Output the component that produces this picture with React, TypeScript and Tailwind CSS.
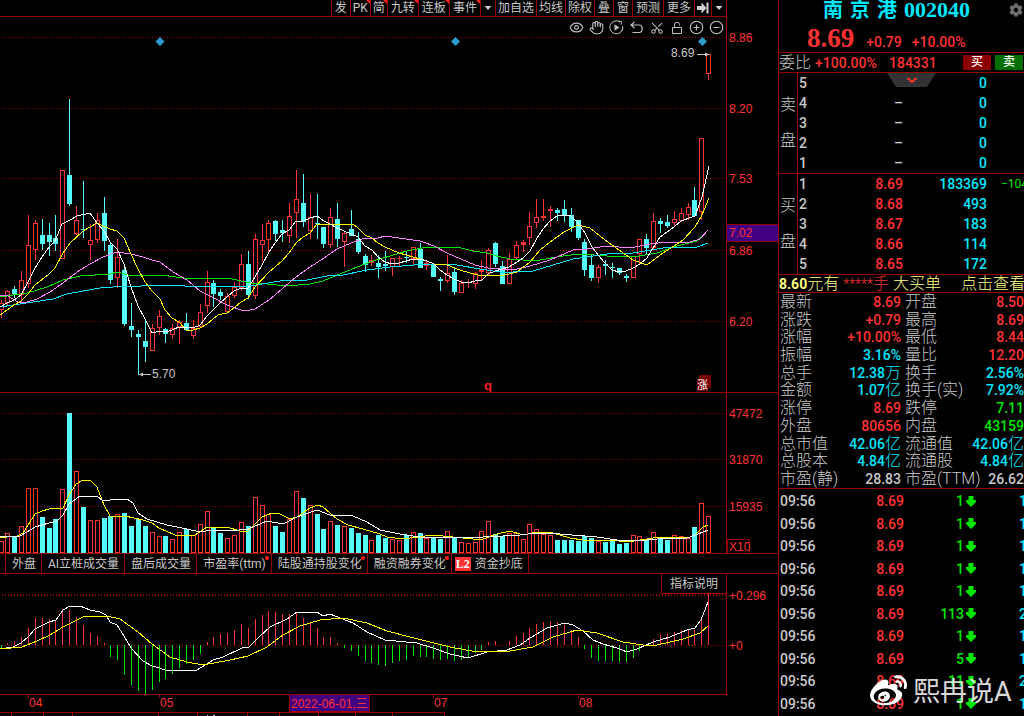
import React from "react";
import { CircleMinus, CirclePlus, Eye, Hand, Scissors, Undo2 } from "lucide-react";
import { FaCog, FaWeibo } from "react-icons/fa";

type Direction = "r" | "c";
// direction, high, low, body top, body bottom, volume top, histogram end
type Day = [Direction, number, number, number, number, number, number];

const days: Day[] = [
  ["r", 300, 318, 303, 310, 541, 649],
  ["r", 290, 306, 291, 303, 533, 643],
  ["c", 286, 298, 289, 294, 537, 641],
  ["r", 271, 302, 280, 295, 526, 637],
  ["r", 215, 288, 245, 284, 488, 628],
  ["r", 220, 260, 223, 250, 488, 618],
  ["c", 219, 250, 235, 244, 517, 618],
  ["c", 223, 256, 235, 242, 528, 619],
  ["c", 215, 251, 238, 244, 519, 621],
  ["r", 170, 259, 170, 259, 489, 609],
  ["c", 99, 206, 175, 204, 413, 610],
  ["r", 206, 235, 220, 234, 471, 617],
  ["c", 181, 238, 229, 230, 507, 625],
  ["r", 224, 260, 240, 245, 520, 633],
  ["r", 213, 243, 220, 240, 520, 636],
  ["c", 197, 251, 213, 241, 518, 643],
  ["c", 242, 284, 245, 280, 516, 657],
  ["r", 239, 288, 257, 278, 514, 660],
  ["c", 266, 326, 270, 324, 513, 675],
  ["c", 303, 337, 326, 330, 526, 685],
  ["c", 330, 375, 334, 337, 519, 691],
  ["c", 319, 362, 341, 347, 526, 694],
  ["r", 324, 351, 328, 351, 532, 690],
  ["r", 310, 335, 316, 328, 536, 682],
  ["c", 328, 343, 329, 334, 536, 679],
  ["r", 324, 339, 328, 335, 539, 674],
  ["r", 320, 344, 322, 327, 532, 668],
  ["c", 313, 330, 323, 330, 529, 664],
  ["r", 320, 339, 328, 336, 535, 660],
  ["r", 304, 328, 312, 327, 524, 654],
  ["r", 271, 313, 282, 306, 511, 642],
  ["c", 280, 307, 283, 294, 528, 637],
  ["c", 289, 300, 292, 296, 533, 634],
  ["r", 293, 313, 296, 312, 538, 633],
  ["r", 282, 298, 287, 296, 535, 630],
  ["r", 254, 291, 264, 288, 522, 624],
  ["c", 251, 299, 264, 295, 526, 628],
  ["r", 234, 299, 239, 296, 497, 619],
  ["r", 224, 261, 240, 245, 505, 615],
  ["r", 220, 252, 223, 240, 514, 611],
  ["c", 220, 241, 221, 234, 526, 612],
  ["c", 220, 242, 230, 233, 532, 614],
  ["r", 203, 243, 216, 236, 519, 614],
  ["r", 170, 238, 199, 213, 491, 613],
  ["c", 174, 227, 203, 222, 498, 618],
  ["r", 194, 239, 217, 231, 505, 623],
  ["c", 194, 239, 223, 224, 514, 628],
  ["c", 227, 248, 227, 244, 529, 637],
  ["r", 208, 248, 217, 245, 521, 637],
  ["c", 203, 247, 219, 239, 525, 643],
  ["r", 231, 267, 233, 242, 526, 648],
  ["c", 210, 236, 229, 236, 528, 651],
  ["c", 232, 254, 239, 252, 533, 656],
  ["c", 254, 272, 256, 265, 535, 661],
  ["r", 255, 266, 260, 263, 540, 663],
  ["c", 255, 278, 263, 267, 535, 665],
  ["c", 251, 271, 264, 266, 538, 666],
  ["r", 258, 276, 258, 267, 539, 663],
  ["r", 256, 266, 258, 259, 540, 661],
  ["c", 252, 263, 257, 258, 535, 660],
  ["r", 247, 266, 247, 259, 532, 656],
  ["c", 243, 268, 249, 268, 533, 657],
  ["r", 261, 270, 263, 266, 538, 657],
  ["c", 265, 277, 265, 277, 537, 659],
  ["c", 277, 291, 279, 281, 539, 660],
  ["r", 255, 283, 273, 281, 531, 659],
  ["c", 268, 295, 272, 292, 537, 661],
  ["r", 280, 293, 283, 293, 542, 660],
  ["r", 279, 288, 282, 283, 543, 657],
  ["r", 272, 289, 273, 284, 542, 653],
  ["r", 260, 280, 269, 272, 531, 650],
  ["r", 248, 275, 250, 273, 521, 642],
  ["c", 242, 267, 243, 264, 534, 641],
  ["c", 261, 284, 266, 284, 536, 645],
  ["r", 253, 284, 259, 284, 533, 641],
  ["r", 241, 260, 245, 258, 533, 636],
  ["r", 240, 252, 242, 245, 539, 633],
  ["r", 212, 245, 226, 238, 524, 628],
  ["r", 199, 228, 217, 223, 529, 624],
  ["r", 199, 221, 216, 218, 534, 622],
  ["r", 206, 227, 209, 211, 535, 621],
  ["c", 208, 221, 210, 213, 540, 622],
  ["c", 200, 222, 209, 216, 540, 625],
  ["c", 208, 232, 215, 227, 540, 630],
  ["c", 220, 240, 220, 238, 541, 637],
  ["c", 239, 276, 242, 270, 536, 649],
  ["c", 255, 281, 265, 278, 538, 658],
  ["r", 265, 283, 267, 278, 541, 661],
  ["c", 260, 275, 264, 266, 542, 661],
  ["c", 263, 278, 267, 268, 541, 661],
  ["c", 268, 275, 268, 273, 544, 662],
  ["c", 274, 282, 276, 278, 543, 662],
  ["r", 256, 278, 256, 278, 535, 658],
  ["r", 239, 265, 239, 254, 536, 651],
  ["c", 234, 254, 239, 248, 539, 646],
  ["r", 213, 250, 221, 248, 532, 639],
  ["c", 218, 233, 221, 224, 539, 635],
  ["c", 215, 228, 222, 226, 540, 634],
  ["r", 211, 226, 219, 223, 535, 632],
  ["r", 208, 222, 213, 221, 536, 630],
  ["r", 203, 220, 207, 215, 538, 630],
  ["c", 187, 216, 200, 216, 527, 630],
  ["r", 138, 220, 138, 212, 503, 618],
  ["r", 54, 80, 54, 74, 516, 594],
];

const RED = "#ff3232";
const CYAN = "#54fcfc";
const GRID = "#960000";
const dayX = (i: number) => Math.floor(1 + 6.87 * i);

const priceLines: [string, string][] = [
  ["#00e600", "0,297 27,293 47,287 63,280 80,276 110,274 117,272 128,275 162,275 183,278 228,278 250,283 267,284 287,286 310,284 323,281 340,274 357,267 373,261 390,256 407,251 427,247 457,247 473,251 487,253 497,256 510,259 523,260 540,260 563,256 580,254 607,256 633,257 657,253 673,247 697,241 708,230"],
  ["#00e6ff", "0,307 33,302 53,299 67,294 100,288 113,287 170,285 200,287 250,286 280,281 307,280 327,276 343,275 367,270 390,267 427,264 457,265 480,269 500,272 513,272 533,271 553,265 573,259 607,254 633,253 663,248 697,247 708,243"],
  ["#ff80ff", "0,295 8,296 18,302 27,302 37,299 50,292 63,283 77,272 90,264 103,257 117,252 131,254 143,257 152,260 160,262 173,272 187,280 200,291 214,298 227,305 241,310 250,310 255,309 269,300 282,289 296,277 310,267 324,258 337,249 351,243 365,238 378,238 385,236 399,238 420,241 434,246 447,253 461,259 475,265 488,268 500,269 517,269 530,266 550,260 573,250 587,249 607,246 630,248 650,244 667,242 690,242 700,239 708,230"],
  ["#ffff00", "0,315 14,305 21,301 28,294 35,285 49,274 55,268 63,253 70,243 83,231 97,223 103,226 110,229 117,231 124,238 131,254 138,269 145,282 152,291 160,299 165,310 172,318 179,322 186,330 193,330 200,328 207,324 218,315 227,313 234,308 241,302 248,298 255,287 269,272 282,261 289,253 296,243 303,237 310,233 317,224 323,225 330,224 353,224 358,228 365,235 372,238 378,243 385,247 399,253 413,257 427,261 434,264 447,265 460,270 470,273 482,276 488,275 505,275 517,272 530,262 540,250 550,242 564,232 578,225 590,228 605,240 619,250 633,260 647,265 660,255 674,246 683,240 695,227 702,215 709,198"],
  ["#ffffff", "0,307 7,303 14,300 21,295 28,282 35,268 42,257 49,247 55,241 62,224 70,220 77,216 90,213 97,223 104,231 110,242 117,249 124,264 131,287 138,306 145,319 152,333 160,331 167,332 179,327 186,327 193,328 200,325 207,316 214,309 220,303 227,297 234,291 241,288 248,288 255,277 262,265 269,252 275,243 282,234 289,230 296,221 303,221 310,218 317,216 324,221 330,224 337,228 344,231 351,234 358,237 365,246 372,250 378,257 385,262 392,264 399,263 413,259 420,259 427,261 434,264 440,270 447,275 454,279 461,282 468,283 475,281 482,280 488,274 495,271 502,269 509,267 517,262 523,258 530,251 537,238 543,229 550,221 557,216 564,215 571,216 578,223 585,233 592,247 598,255 605,263 612,270 619,272 626,271 633,268 640,264 647,258 653,248 660,237 667,232 674,227 681,221 695,216 702,197 709,166"],
];

const volumeLines: [string, string][] = [
  ["#ffff00", "0,538 7,537 17,536 23,533 28,525 35,514 42,511 49,509 63,508 69,495 76,484 83,480 90,480 97,487 104,505 110,516 117,517 125,516 143,520 152,523 159,528 175,535 195,535 207,527 227,527 240,531 248,531 255,524 262,517 272,513 280,514 290,519 297,517 310,508 318,505 323,507 337,519 348,525 363,529 380,534 387,537 403,539 433,535 453,537 473,539 483,539 497,534 510,531 523,535 537,532 553,533 570,538 583,540 610,540 627,542 647,539 660,537 687,538 695,535 703,527 708,525"],
  ["#ffffff", "0,537 20,536 27,532 35,527 49,523 57,521 63,515 69,504 80,496 97,496 103,501 117,499 127,499 133,503 138,513 147,519 167,525 187,529 200,532 213,530 230,531 248,529 267,521 283,524 297,517 317,510 330,515 353,516 367,522 380,530 400,534 420,537 483,537 503,536 520,535 537,533 560,534 597,537 617,540 637,541 657,539 687,538 698,534 708,530"],
];

const macdLines: [string, string][] = [
  ["#ffffff", "0,649 13,647 21,643 28,637 35,629 49,622 56,620 63,610 70,606 80,606 90,610 100,612 106,615 110,622 117,625 124,636 131,648 143,661 152,666 160,668 167,671 180,670 195,671 202,667 213,660 223,657 242,648 249,647 260,636 270,627 287,619 297,612 317,612 323,616 330,614 353,623 367,632 385,640 417,643 433,648 450,654 468,658 487,652 507,650 520,645 530,638 547,628 565,623 573,625 583,631 593,640 603,644 617,648 627,652 637,649 653,642 670,637 687,630 695,628 701,620 708,602"],
  ["#ffff00", "0,649 22,647 37,641 50,635 63,627 83,617 107,616 120,619 138,632 152,644 170,657 187,662 203,665 230,660 248,656 267,647 283,635 300,626 320,620 343,618 367,623 387,631 410,637 430,642 450,647 477,652 510,651 533,647 553,637 577,630 597,633 623,642 643,645 657,645 683,639 700,633 708,626"],
];

function Curves({ lines }: { lines: [string, string][] }) {
  return (
    <>
      {lines.map(([color, points], i) => (
        <polyline key={i} points={points} fill="none" stroke={color} strokeWidth="1" shapeRendering="crispEdges" />
      ))}
    </>
  );
}

function GridLine({ y, thick = 1 }: { y: number; thick?: number }) {
  return (
    <line x1="2" x2="726" y1={y} y2={y} stroke={GRID} strokeWidth={thick} strokeDasharray="1 2" shapeRendering="crispEdges" />
  );
}

function PriceChart() {
  return (
    <svg className="block h-[375px] w-full" viewBox="0 17 726 375" preserveAspectRatio="none" role="img" aria-label="日K线">
      {[37.5, 108.5, 178.5, 250.5, 321.5].map((y) => (
        <GridLine key={y} y={y} />
      ))}
      <g shapeRendering="crispEdges">
        {days.map(([dir, high, low, top, bottom], i) => {
          const x = dayX(i);
          const color = dir === "r" ? RED : CYAN;
          const hollow = dir === "r" && bottom - top > 3;
          return (
            <g key={i}>
              <rect x={x} y={high} width="1" height={low - high} fill={color} />
              {hollow ? (
                <rect x={x - 1.5} y={top + 0.5} width="4" height={bottom - top - 1} fill="#000" stroke={color} />
              ) : (
                <rect x={x - 2} y={top} width="5" height={bottom - top} fill={color} />
              )}
            </g>
          );
        })}
      </g>
      <Curves lines={priceLines} />
      {[160, 455.5, 702.5].map((x) => (
        <path key={x} d={`M${x} 37 l4.5 4.5 l-4.5 4.5 l-4.5 -4.5z`} fill="#2b9bd0" />
      ))}
      <g fill="#c8c8c8" fontSize="12" fontFamily="Liberation Sans, Arial, sans-serif">
        <text x="671" y="57">8.69</text>
        <text x="152" y="378">5.70</text>
      </g>
      <path d="M697 54.5 H709 M140 374.5 H151" stroke="#c8c8c8" />
      <path d="M705 52.5 L709 54.5 L705 56.5z M143 372.5 L139 374.5 L143 376.5z" fill="#c8c8c8" />
      <text x="484" y="390" fill="#ff1e1e" fontSize="13" fontWeight="700" fontFamily="Liberation Sans, Arial, sans-serif">q</text>
      <path d="M699 375 H711 V388 H708 V391 H697 V379 H699z" fill="#780000" />
      <text x="697" y="389" fill="#fff" fontSize="11" fontFamily="Noto Sans CJK SC, sans-serif">涨</text>
    </svg>
  );
}

function VolumeChart() {
  return (
    <svg className="block h-[160px] w-full" viewBox="0 393 726 160" preserveAspectRatio="none" role="img" aria-label="成交量">
      {[413.5, 459.5, 506.5].map((y) => (
        <GridLine key={y} y={y} />
      ))}
      <g shapeRendering="crispEdges">
        {days.map(([dir, , , , , top], i) =>
          dir === "r" ? (
            <rect key={i} x={dayX(i) - 1.5} y={top + 0.5} width="4" height={552 - top} fill="#000" stroke={RED} />
          ) : (
            <rect key={i} x={dayX(i) - 2} y={top} width="5" height={553 - top} fill={CYAN} />
          ),
        )}
      </g>
      <Curves lines={volumeLines} />
    </svg>
  );
}

function MacdChart() {
  return (
    <svg className="block h-[120px] w-full" viewBox="0 574 726 120" preserveAspectRatio="none" role="img" aria-label="MACD">
      <GridLine y={595} thick={2} />
      <GridLine y={645.5} />
      <g shapeRendering="crispEdges">
        {days.map(([, , , , , , end], i) => (
          <rect
            key={i}
            x={dayX(i)}
            y={Math.min(end, 645)}
            width="1"
            height={Math.abs(end - 645)}
            fill={end < 645 ? RED : "#00e600"}
          />
        ))}
      </g>
      <Curves lines={macdLines} />
    </svg>
  );
}

function Axis({ top, height, labels, children }: { top: number; height: number; labels: [string, number][]; children?: React.ReactNode }) {
  return (
    <svg className="block shrink-0" width="51" height={height} viewBox={`0 ${top} 51 ${height}`}>
      {children}
      <g fill={RED} fontSize="12" fontFamily="Liberation Sans, Arial, sans-serif">
        {labels.map(([text, y]) => (
          <text key={text} x="2" y={y}>
            {text}
          </text>
        ))}
      </g>
    </svg>
  );
}

const WIDE = "relative flex items-center border-l border-[#960000] px-[3px] text-xs leading-4 text-[#c8c8c8]";
const TIGHT = "relative flex items-center border-l border-[#960000] px-0.5 text-xs leading-4 text-[#c8c8c8]";

const tools: [string, boolean, string][] = [
  ["发", false, WIDE],
  ["PK", true, TIGHT],
  ["简", true, TIGHT],
  ["九转", true, WIDE],
  ["连板", true, WIDE],
  ["事件", true, WIDE],
  ["▾", false, WIDE],
  ["加自选", false, TIGHT],
  ["均线", false, TIGHT],
  ["除权", false, TIGHT],
  ["叠", false, WIDE],
  ["窗", false, WIDE],
  ["预测", false, WIDE],
  ["更多", false, WIDE],
  ["⇥", false, TIGHT],
  ["▾", false, WIDE],
];

function ToolGlyph({ name }: { name: string }) {
  if (name === "▾")
    return (
      <svg width="8" height="10" viewBox="0 0 8 10">
        <path d="M0.5 3 H7.5 L4 7z" fill="#d0d0d0" />
      </svg>
    );
  if (name === "⇥")
    return (
      <svg width="12" height="12" viewBox="0 0 12 12">
        <path d="M0 4 H4.5 V0.5 L9.5 6 L4.5 11.5 V8 H0z M9.5 0.5 H11.5 V11.5 H9.5z" fill="#d0d0d0" />
      </svg>
    );
  return <>{name}</>;
}

function Toolbar() {
  return (
    <nav className="mr-[51px] flex h-[17px] justify-end overflow-hidden border-r border-b border-[#960000]">
      {tools.map(([name, flagged, style], i) => (
        <button
          key={i}
          type="button"
          aria-label={name === "▾" ? "展开" : name === "⇥" ? "右移" : undefined}
          className={style}
        >
          <ToolGlyph name={name} />
          {flagged && (
            <svg className="absolute top-0 right-0" width="4" height="4" viewBox="0 0 4 4">
              <path d="M0 0 H4 V4z" fill="#ff1e1e" />
            </svg>
          )}
        </button>
      ))}
    </nav>
  );
}

function ReplayIcon() {
  return (
    <svg width="15" height="15" viewBox="0 0 15 15" fill="none" stroke="currentColor">
      <path d="M11 2 A6.5 6.5 0 1 0 13.7 6" />
      <path d="M9.5 1 L12.5 1.5 L12 4.5" />
      <path d="M13.8 8.5 A6.5 6.5 0 0 1 12.5 11.5" />
      <path d="M5.5 4.2 L10.5 7.5 L5.5 10.8z" fill="currentColor" stroke="none" />
    </svg>
  );
}

function UndoIcon() {
  return (
    <svg width="13" height="13" viewBox="0 0 13 13" fill="none" stroke="currentColor" strokeWidth="1.2">
      <path d="M4.5 1 L1 4 L4.5 7 M1 4 H9.5 A2.5 3.5 0 0 1 9.5 11.5 H2.5" />
    </svg>
  );
}

function ChartTools() {
  const button = "flex size-[15px] items-center justify-center";
  return (
    <div className="absolute top-[3px] right-0.5 flex gap-[5px] text-[#c0c0c0]">
      <button type="button" aria-label="显示" className={button}><Eye size={15} strokeWidth={1.8} /></button>
      <button type="button" aria-label="拖动" className={button}><Hand size={15} strokeWidth={1.8} /></button>
      <button type="button" aria-label="回放" className={button}><ReplayIcon /></button>
      <button type="button" aria-label="撤销" className={button}><UndoIcon /></button>
      <button type="button" aria-label="剪切" className={button}><Scissors size={14} strokeWidth={1.8} className="-rotate-90" /></button>
      <button type="button" aria-label="锁定" className={button}>
        <svg width="12" height="14" viewBox="0 0 12 14" fill="none" stroke="currentColor">
          <path d="M1.5 6.5 H10.5 V12.5 H1.5z M3.5 6.5 V4 A2.5 2.5 0 0 1 8.5 3.5 V4.5" />
        </svg>
      </button>
      <button type="button" aria-label="放大" className={button}><CirclePlus size={15} strokeWidth={1.8} /></button>
      <button type="button" aria-label="缩小" className={button}><CircleMinus size={15} strokeWidth={1.8} /></button>
    </div>
  );
}

const tabs: [string, boolean][] = [
  ["外盘", false],
  ["AI立桩成交量", false],
  ["盘后成交量", false],
  ["市盈率(ttm)", true],
  ["陆股通持股变化", true],
  ["融资融券变化", true],
  ["资金抄底", false],
];

function IndicatorTabs() {
  return (
    <div className="flex h-[21px] border-y border-[#960000] pl-[5px]">
      {tabs.map(([name, dot]) => (
        <button
          key={name}
          type="button"
          className="relative flex items-center border-l border-[#960000] pr-[5px] pl-1.5 text-xs leading-4 whitespace-nowrap text-[#c8c8c8] last:border-r last:pl-[3px]"
        >
          {name === "资金抄底" && (
            <span className="mr-1 bg-[#ff3232] px-px font-['Liberation_Serif',serif] text-xs leading-[14px] font-bold text-white">L2</span>
          )}
          {name}
          {dot && <span className="absolute top-0.5 right-0.5 size-1 rounded-full bg-[#ff1e1e]" />}
        </button>
      ))}
    </div>
  );
}

function Dates() {
  const months: [string, number][] = [
    ["04", 28],
    ["05", 159],
    ["07", 433],
    ["08", 578],
  ];
  return (
    <div className="mr-[51px]">
      <svg className="block h-[21px] w-full" viewBox="0 695 727 21" preserveAspectRatio="none" role="img" aria-label="日期">
        <g fill={RED} fontSize="12" fontFamily="Liberation Sans, Noto Sans CJK SC, sans-serif">
          <rect x="289.5" y="694.5" width="80" height="17" fill="#400080" stroke={GRID} />
          <text x="291" y="708">2022-06-01,三</text>
          {months.map(([label, x]) => (
            <React.Fragment key={label}>
              <rect x={x} y="695" width="1" height="3" fill={GRID} />
              <text x={x + 1} y="707">{label}</text>
            </React.Fragment>
          ))}
        </g>
        <path
          d="M0 712.5 H444.5 V716 M11.5 713 V716 M43.5 713 V716 M72.5 713 V716 M158.5 713 V716 M197.5 713 V716 M247.5 713 V716 M279.5 713 V716 M318.5 713 V716 M355.5 713 V716 M392.5 713 V716"
          fill="none"
          stroke={GRID}
          shapeRendering="crispEdges"
        />
        <path d="M207 715 h1 v1 h-1z M213 715 h2 v1 h-2z" fill="#c8c8c8" shapeRendering="crispEdges" />
      </svg>
    </div>
  );
}

function Book({ side, rows }: { side: string; rows: [string, string, string, string?][] }) {
  return (
    <section className="flex h-[101px] border-b border-[#960000]">
      <h2 className="flex w-[19px] shrink-0 flex-col items-center justify-center border-r border-[#960000] text-base leading-9 font-light text-[#c8c8c8]">
        <span>{side}</span>
        <span>盘</span>
      </h2>
      <table className="h-[100px] w-full table-fixed border-collapse text-sm leading-none font-medium">
        <tbody>
          {rows.map(([level, price, amount, change]) => (
            <tr key={level}>
              <td className="w-[21px] p-0 pl-px text-[#c8c8c8]">{level}</td>
              <td className={price === "–" ? "w-[84px] p-0 text-right text-[#c8c8c8]" : "w-[84px] p-0 text-right text-[#ff3232]"}>{price}</td>
              <td className="w-[84px] p-0 text-right text-[#00e6ff]">{amount}</td>
              <td className="overflow-hidden p-0 pl-3.5 text-xs leading-none font-normal whitespace-nowrap text-[#00e600]">{change}</td>
            </tr>
          ))}
        </tbody>
      </table>
    </section>
  );
}

const R = "w-[62px] p-0 text-right text-[#ff3232]";
const C = "w-[62px] p-0 text-right text-[#00e6ff]";
const G = "w-[62px] p-0 text-right text-[#00e600]";
const W = "w-[62px] p-0 text-right text-[#c8c8c8]";

const stats: [string, string, string, string, string, string][] = [
  ["最新", "8.69", R, "开盘", "8.50", R],
  ["涨跌", "+0.79", R, "最高", "8.69", R],
  ["涨幅", "+10.00%", R, "最低", "8.44", R],
  ["振幅", "3.16%", C, "量比", "12.20", R],
  ["总手", "12.38万", C, "换手", "2.56%", C],
  ["金额", "1.07亿", C, "换手(实)", "7.92%", C],
  ["涨停", "8.69", R, "跌停", "7.11", G],
  ["外盘", "80656", R, "内盘", "43159", G],
  ["总市值", "42.06亿", C, "流通值", "42.06亿", C],
  ["总股本", "4.84亿", C, "流通股", "4.84亿", C],
  ["市盈(静)", "28.83", W, "市盈(TTM)", "26.62", W],
];

function Figure({ value }: { value: string }) {
  const unit = value.slice(-1);
  if (unit !== "亿" && unit !== "万") return <>{value}</>;
  return (
    <>
      {value.slice(0, -1)}
      <span className="text-base leading-none font-light">{unit}</span>
    </>
  );
}

function Stats() {
  return (
    <table className="h-[195px] w-full table-fixed border-collapse text-sm leading-none font-medium whitespace-nowrap">
      <tbody>
        {stats.map(([a, av, ac, b, bv, bc]) => (
          <tr key={a}>
            <th scope="row" className="w-[60px] p-0 pl-px text-left text-base leading-none font-light text-[#c8c8c8]">{a}</th>
            <td className={ac}><Figure value={av} /></td>
            <th scope="row" className="w-[61px] p-0 pl-1 text-left text-base leading-none font-light text-[#c8c8c8]">{b}</th>
            <td className={bc}><Figure value={bv} /></td>
          </tr>
        ))}
      </tbody>
    </table>
  );
}

const trades: [string, string][] = [
  ["1", "1"],
  ["1", "1"],
  ["1", "1"],
  ["1", "1"],
  ["1", "1"],
  ["113", "2"],
  ["1", "1"],
  ["5", "1"],
  ["11", "2"],
  ["1", "1"],
];

function Trades() {
  return (
    <table className="mt-px h-[225px] w-full table-fixed border-collapse text-sm leading-none font-medium">
      <tbody>
        {trades.map(([amount, count], i) => (
          <tr key={i}>
            <td className="w-[60px] p-0 pl-px text-[#c8c8c8]">09:56</td>
            <td className="w-[65px] p-0 text-right text-[#ff3232]">8.69</td>
            <td className="w-[72px] p-0 text-[#00e600]">
              <span className="flex items-center justify-end gap-0.5">
                {amount}
                <svg width="10" height="11" viewBox="0 0 10 11" aria-label="卖出">
                  <path d="M2.5 0 H7.5 V4 H10 V6 L5 11 L0 6 V4 H2.5z" fill="#00e600" />
                </svg>
              </span>
            </td>
            <td className="overflow-hidden p-0 pl-[43px] text-[#00e6ff]">{count}</td>
          </tr>
        ))}
      </tbody>
    </table>
  );
}

function QuotePanel() {
  return (
    <aside className="relative w-[246px] shrink-0 overflow-hidden border-l border-[#960000]">
      <header className="h-[53px] border-b border-[#960000]">
        <h1 className="flex h-5 items-center gap-[7px] pl-11 text-xl leading-5 font-bold text-[#00e6ff]">
          <span>南</span>
          <span>京</span>
          <span>港</span>
          <span className="font-['Liberation_Serif',serif] text-[22px] leading-5">002040</span>
        </h1>
        <button type="button" aria-label="设置" className="absolute top-[3px] right-px text-[#6e6e6e]">
          <FaCog size={14} />
        </button>
        <p className="flex h-8 items-baseline gap-2.5 pl-7 text-sm leading-8 font-medium text-[#ff3232]">
          <span className="mr-0.5 font-['Liberation_Serif',serif] text-[27px] leading-9 font-bold">8.69</span>
          <span>+0.79</span>
          <span>+10.00%</span>
        </p>
      </header>
      <div className="flex h-5 items-center border-b border-[#960000] text-sm leading-none font-medium text-[#ff3232]">
        <span className="w-9 text-base leading-none font-light text-[#c8c8c8]">委比</span>
        <span className="w-[74px]">+100.00%</span>
        <span className="flex-1">184331</span>
        <button type="button" className="mr-1 h-[15px] w-7 bg-[#8c0000] text-xs leading-[15px] text-white">买</button>
        <button type="button" className="mr-px h-[15px] w-7 bg-[#006e00] text-xs leading-[15px] text-white">卖</button>
      </div>
      <div className="relative">
        <Book
          side="卖"
          rows={[
            ["5", "", "0"],
            ["4", "–", "0"],
            ["3", "–", "0"],
            ["2", "–", "0"],
            ["1", "–", "0"],
          ]}
        />
        <button type="button" aria-label="收起" className="absolute top-0 left-[108px]">
          <svg className="block" width="49" height="14" viewBox="0 0 49 14">
            <path d="M0 0 H49 L40 14 H9z" fill="#333" />
            <path d="M20.5 5 L25 9 L29.5 5" fill="none" stroke="#ff3232" strokeWidth="1.8" />
          </svg>
        </button>
      </div>
      <Book
        side="买"
        rows={[
          ["1", "8.69", "183369", "−104"],
          ["2", "8.68", "493"],
          ["3", "8.67", "183"],
          ["4", "8.66", "114"],
          ["5", "8.65", "172"],
        ]}
      />
      <a href="#orders" className="flex h-[18px] items-center border-b border-[#960000] text-base leading-none font-light whitespace-nowrap text-[#ffff80]">
        <span className="text-sm leading-none font-bold">8.60</span>
        <span className="mr-1">元有</span>
        <span className="mr-1 text-[#ff3232]"><span className="text-sm leading-none">*****</span>手</span>
        <span className="mr-5">大买单</span>
        <span>点击查看</span>
      </a>
      <div className="border-b border-[#960000]">
        <Stats />
      </div>
      <Trades />
      <div className="absolute bottom-1.5 left-[91px] flex items-center gap-1.5 text-white/85">
        <FaWeibo size={37} className="text-white" />
        <span className="text-[27px] leading-8 whitespace-nowrap">熙冉说A</span>
      </div>
    </aside>
  );
}

export default function App() {
  return (
    <main className="flex min-h-screen overflow-hidden bg-black font-['Roboto','Noto_Sans_CJK_SC',sans-serif]">
      <div className="min-w-0 flex-1">
        <Toolbar />
        <section className="flex border-b border-[#960000]">
          <div className="relative min-w-0 flex-1 border-r border-[#960000]">
            <PriceChart />
            <ChartTools />
          </div>
          <Axis
            top={17}
            height={375}
            labels={[["8.86", 42], ["8.20", 113], ["7.53", 183], ["7.02", 237], ["6.86", 255], ["6.20", 326]]}
          >
            <rect x="-1" y="224.5" width="53" height="17" fill="#400080" stroke={GRID} />
          </Axis>
        </section>
        <section className="flex">
          <div className="min-w-0 flex-1 border-r border-[#960000]">
            <VolumeChart />
          </div>
          <Axis top={393} height={160} labels={[["47472", 418], ["31870", 464], ["15935", 511], ["X10", 551]]}>
            <rect x="0.5" y="539.5" width="22" height="14" fill="none" stroke={GRID} />
          </Axis>
        </section>
        <IndicatorTabs />
        <section className="flex">
          <div className="relative min-w-0 flex-1 border-r border-b border-[#960000]">
            <MacdChart />
            <button type="button" className="absolute top-0 right-0 h-5 border-b border-l border-[#960000] bg-black px-2 text-xs leading-5 text-[#c8c8c8]">
              指标说明
            </button>
          </div>
          <Axis top={574} height={120} labels={[["+0.296", 600], ["+0", 650]]} />
        </section>
        <Dates />
      </div>
      <QuotePanel />
    </main>
  );
}
